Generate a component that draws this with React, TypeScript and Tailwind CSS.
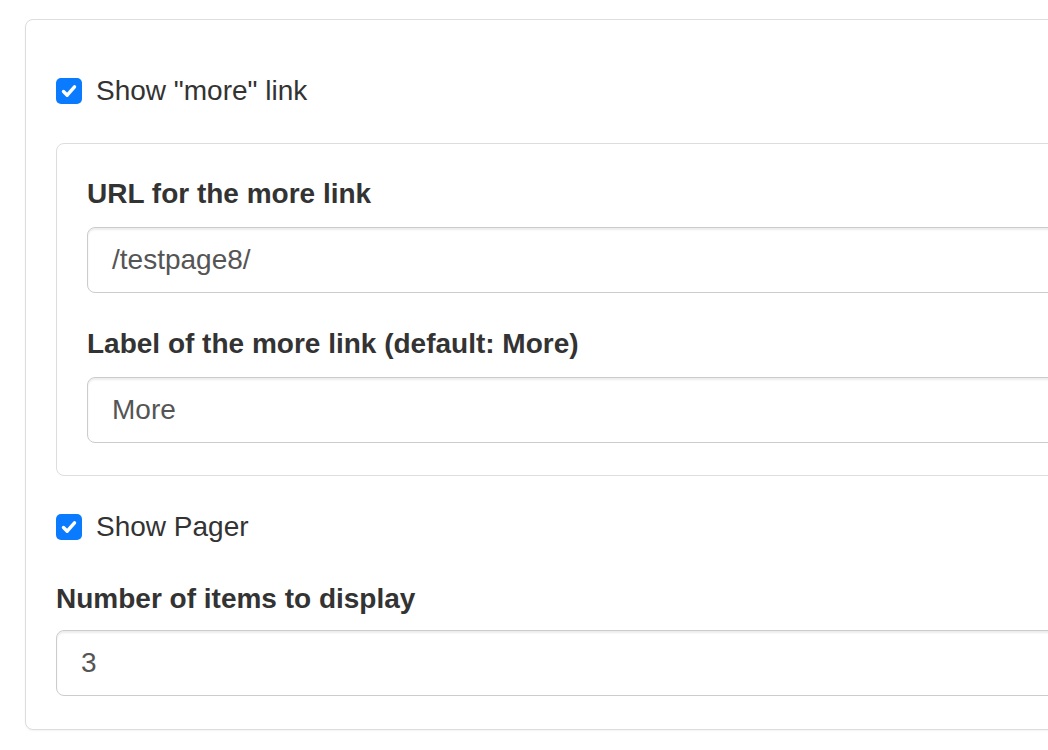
const CheckBox = () => (
  <span className="flex h-[26px] w-[26px] shrink-0 items-center justify-center rounded-[5px] bg-[#0a7bff]">
    <svg width="18" height="18" viewBox="0 0 18 18" fill="none">
      <path d="M3.5 9.5 L7.2 13.2 L14.5 4.8" stroke="white" strokeWidth="3.4" strokeLinecap="round" strokeLinejoin="round" />
    </svg>
  </span>
);

const CheckRow = ({ label }: { label: string }) => (
  <label className="flex h-[40px] items-center gap-[14px] text-[28px] leading-[40px] text-[#333]">
    <CheckBox />
    <span>{label}</span>
  </label>
);

const Field = ({
  label,
  value,
  className = "",
  inputClass = "mt-[13px]",
}: {
  label: string;
  value: string;
  className?: string;
  inputClass?: string;
}) => (
  <div className={className}>
    <p className="text-[28px] font-bold leading-[40px] text-[#333]">{label}</p>
    <div
      className={`${inputClass} flex h-[66px] items-center rounded-[8px] border border-[#ccc] bg-white px-[24px] text-[28px] text-[#555] shadow-[inset_0_2px_2px_rgba(0,0,0,0.075)]`}
    >
      {value}
    </div>
  </div>
);

export default function App() {
  return (
    <div
      className="h-[750px] w-[1048px] overflow-hidden bg-white"
      style={{ fontFamily: '"Liberation Sans", Arial, sans-serif' }}
    >
      <div className="ml-[25px] mt-[19px] w-[1100px] rounded-[8px] border border-[#ddd] bg-white px-[30px] pb-[33px] pt-[51px] shadow-[0_1px_2px_rgba(0,0,0,0.05)]">
        <CheckRow label={'Show "more" link'} />
        <div className="mt-[32px] rounded-[8px] border border-[#ddd] px-[30px] pb-[32px] pt-[30px]">
          <Field label="URL for the more link" value="/testpage8/" />
          <Field label="Label of the more link (default: More)" value="More" className="mt-[31px]" />
        </div>
        <div className="mt-[31px]">
          <CheckRow label="Show Pager" />
        </div>
        <Field label="Number of items to display" value="3" className="mt-[32px]" inputClass="mt-[11px]" />
      </div>
    </div>
  );
}
